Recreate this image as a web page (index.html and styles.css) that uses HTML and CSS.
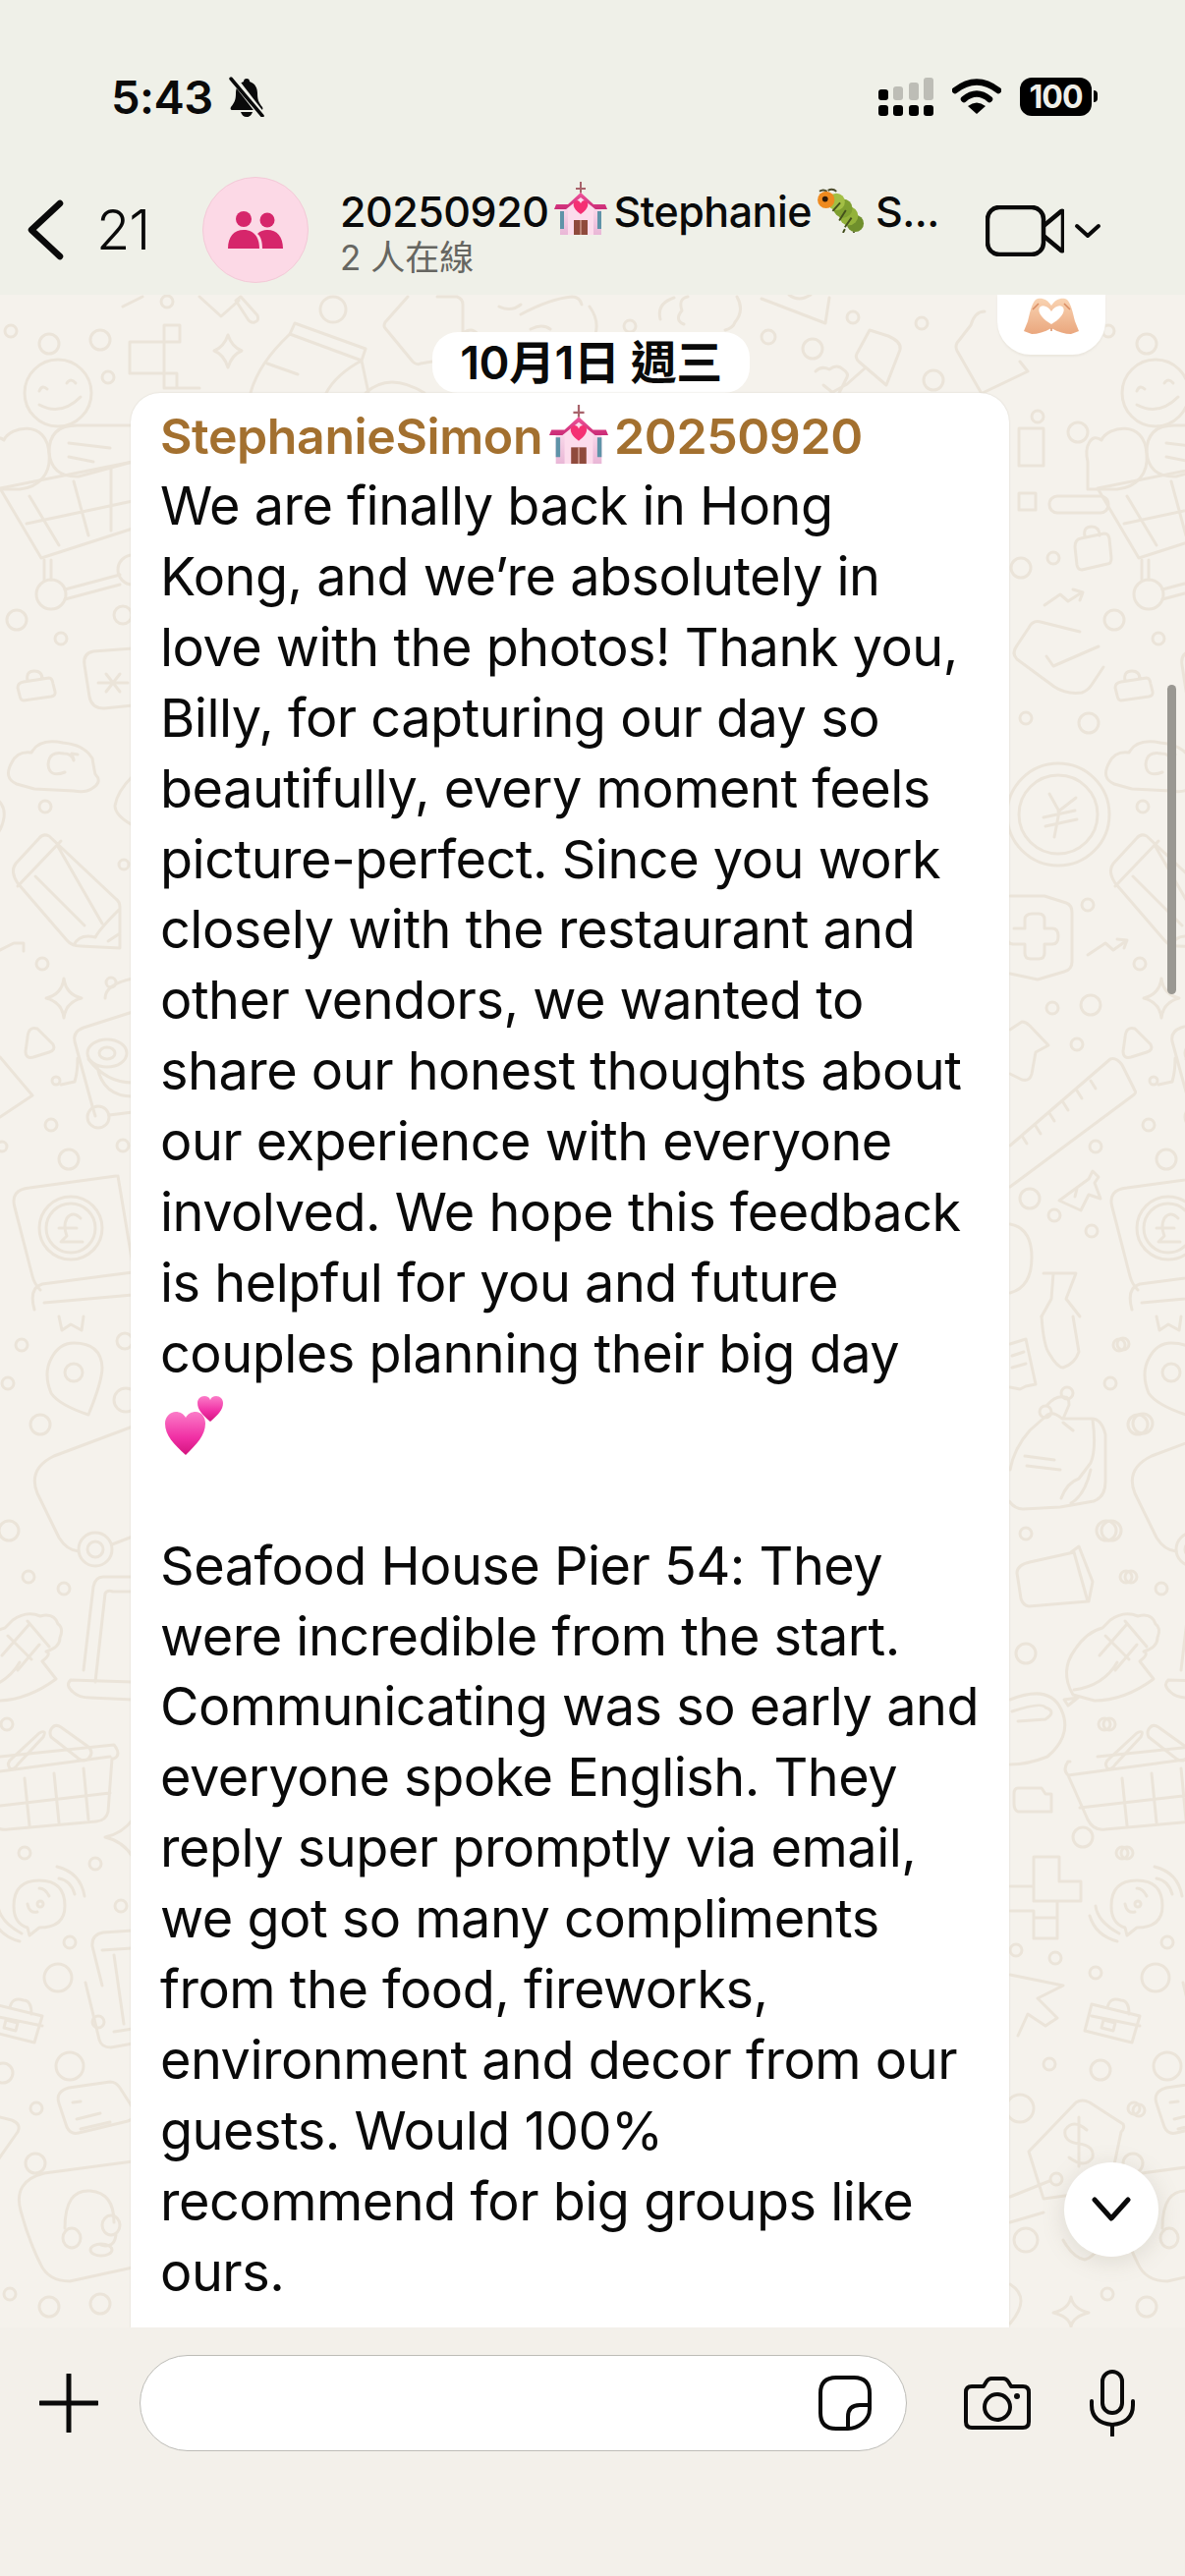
FILE: index.html
```html
<!DOCTYPE html>
<html lang="zh-Hant">

<head>
    <meta charset="UTF-8">
    <title>20250920 Stephanie</title>
    <link rel="stylesheet" href="styles.css">
</head>

<body>
    <!-- emoji used more than once -->
    <svg class="defs" width="0" height="0">
        <defs>
            <linearGradient id="roofPink" x1="0" y1="0" x2="0" y2="1">
                <stop offset="0" stop-color="#f0559b" />
                <stop offset="1" stop-color="#c92a75" />
            </linearGradient>
            <linearGradient id="wallPink" x1="0" y1="0" x2="0" y2="1">
                <stop offset="0" stop-color="#fbdcec" />
                <stop offset="1" stop-color="#e9b6d6" />
            </linearGradient>
            <linearGradient id="heartPink" x1="0" y1="0" x2="0" y2="1">
                <stop offset="0" stop-color="#fb7cc8" />
                <stop offset="0.6" stop-color="#f02fa4" />
                <stop offset="1" stop-color="#d4147f" />
            </linearGradient>
            <linearGradient id="handPeach" x1="0" y1="0" x2="0" y2="1">
                <stop offset="0" stop-color="#f9d3b2" />
                <stop offset="1" stop-color="#eaa77e" />
            </linearGradient>
            <symbol id="church" viewBox="0 0 54 54">
                <path d="M26 0h2v6h4v2h-4v7h-2V8h-4V6h4z" fill="#a8636b" />
                <path d="M6 24h42v30H6z" fill="url(#wallPink)" />
                <path d="M14 23 27 11 40 23v31H14z" fill="#fcdcec" />
                <path d="M27 11 14 23H2l-2 5h12l15-12 15 12h12l-2-5H40z" fill="url(#roofPink)" />
                <path d="M27 33c-9-6-9-13-4-14 2 0 3 1 4 3 1-2 2-3 4-3 5 1 5 8-4 14z" fill="#f52f73" />
                <path d="M20 39h14v15H20z" fill="#8f4a3c" />
                <path d="M26.500 39h1v15h-1z" fill="#e8b9b0" />
                <path d="M6 30h4v18H6zM44 30h4v18h-4z" fill="#5f93a8" />
            </symbol>
            <symbol id="caterpillar" viewBox="0 0 54 48">
                <path d="M3 4q4-3 8 0M12 3q5-3 9 1" fill="none" stroke="#4b4a2a" stroke-width="2" />
                <ellipse cx="41" cy="38" rx="9" ry="9" fill="#6f8f2c" />
                <ellipse cx="34" cy="30" rx="10" ry="10" fill="#93b23a" />
                <ellipse cx="28" cy="22" rx="10" ry="10" fill="#7f9f30" />
                <ellipse cx="21" cy="15" rx="9" ry="9" fill="#a3bf45" />
                <path d="M31 24 24 35M37 32l-7 10M25 16l-8 9" stroke="#44501c" stroke-width="2" />
                <circle cx="10" cy="13" r="9" fill="#ee8a1f" />
                <circle cx="9" cy="12" r="3" fill="#2d1a0a" />
                <path d="M30 44l-2 4M40 47l-1 1" stroke="#3f4a19" stroke-width="2" />
            </symbol>
            <symbol id="hearts" viewBox="0 0 62 62">
                <path d="M22 61C10 50 1 41 1 29 1 22 6 17 12 17c4 0 8 2 10 6 2-4 6-6 10-6 6 0 10 5 10 12 0 12-9 21-20 32z" fill="url(#heartPink)" />
                <path d="M47 27C39 20 34 15 34 8c0-4 3-7 7-7 3 0 5 1 6 4 1-3 3-4 6-4 4 0 7 3 7 7 0 7-5 12-13 19z" fill="url(#heartPink)" />
            </symbol>
            <symbol id="hearthands" viewBox="0 0 56 38">
                <path d="M28 8C24 1 16-1 12 2 8 6 6 16 4 24L0 34l8 3c6 0 13-2 20-6 7 4 14 6 20 6l8-3-4-10C50 16 48 6 44 2 40-1 32 1 28 8zm0 6c3-5 8-7 11-5 4 3 1 11-11 18-12-7-15-15-11-18 3-2 8 0 11 5z" fill="url(#handPeach)" fill-rule="evenodd" />
                <path d="M9 12l6-6M47 12l-6-6M28 31v3" stroke="#d98c62" stroke-width="1.500" fill="none" />
            </symbol>
            <!-- doodles of the tile edge, appears left and again right -->
            <g id="edgeDoodles">
                <circle cx="11" cy="337" r="6" />
                <circle cx="50" cy="350" r="10" />
                <circle cx="102" cy="346" r="10" />
                <circle cx="110" cy="384" r="6" />
                <circle cx="59" cy="400" r="34" />
                <path d="M40 398q3-7 8-2M68 390q4-6 9 0M40 412q22 12 42-8" />
                <path d="M-10 470c-4-16 4-30 14-22 6-14 44-22 46 14 2 20-10 34-30 36H-10z" />
                <path d="M70 433h65M50 460q0-27 28-27M50 460q2 26 30 25l55-15M70 451l42 5M70 465l25 5" />
                <path d="M0 497 42 568 135 538M0 497 135 470M30 505l30 50M75 490l15 55M27 533l108-23M113 475v65" />
                <path d="M45 570v20M52 570v20" />
                <circle cx="52" cy="605" r="15" />
                <path d="M66 600l56-15M66 610l56-15" />
                <circle cx="135" cy="580" r="15" />
                <circle cx="17" cy="631" r="10" />
                <circle cx="62" cy="650" r="6" />
                <circle cx="125" cy="626" r="9" />
                <path d="M24 694l26-4q3 0 4 6l2 8q1 4-4 5l-28 4q-3 0-4-5l-2-8q0-5 6-6zM28 693q-2-10 7-10 8 0 8 8" />
                <path d="M135 660l-40 3q-11 2-9 14l5 32q2 12 15 12l29-3M100 695h30M108 686l14 18M122 686l-14 18" />
                <path d="M35 803l-18-5q-14-6-5-22 6-12 20-10 8-15 32-10 22 2 30 16 2 12 3 16 8 8-4 15-6 4-18 2zM66 786q-16 6-17-8 1-14 16-11 8 0 10 7M75 773l-2-6 6 1" />
                <circle cx="46" cy="821" r="6" />
                <path d="M135 790q-16 16-18 30 0 10 18 20" />
                <path d="M50 851q-6-3-10 2l-24 26q-6 8 2 20l50 58q5 6 14 6l40 2v-42q0-5-4-8zM18 902l44-46M36 892l50 50M58 860l46 80M75 962q6-12 22-8 4-8 24-28M110 958l12-8" />
                <circle cx="126" cy="880" r="5" />
                <circle cx="43" cy="981" r="6" />
                <path d="M65 996q2 16 18 20-16 4-18 20-2-16-18-20 16-4 18-20z" />
                <path d="M28 1056q1-12 10-9l16 16q3 6-4 8l-16 5q-8 2-8-6z" />
                <circle cx="113" cy="1000" r="5" />
                <path d="M107 1016q0-14 28-20" />
                <path d="M135 1030l-50 16q-11 4-9 14l18 66 3 10M62 1104l14-3q3-10 3-24" />
                <ellipse cx="109" cy="1072" rx="20" ry="14" />
                <ellipse cx="109" cy="1072" rx="8" ry="6" />
                <path d="M90 1078q18 24 45 24M135 1116q-30 0-36-30" />
                <circle cx="57" cy="1100" r="4" />
                <circle cx="100" cy="1137" r="11" />
                <path d="M111 1135l24-3" />
                <circle cx="52" cy="1145" r="6" />
                <circle cx="125" cy="1166" r="6" />
                <circle cx="70" cy="1180" r="10" />
                <path d="M118 1197l-88 12q-20 2-15 20l18 70q2 8 8 14M135 1295l-92 12q-14 4-8 26M45 1326l90-8M120 1197l15 90" />
                <circle cx="72" cy="1250" r="32" />
                <circle cx="72" cy="1250" r="25" />
                <path d="M82 1240q-8-8-14 0-4 8 0 18l-6 6h22M60 1250h18" />
                <path d="M60 1340l3 14 9-6 11 6 2-14" />
                <path d="M75 1367q28 0 29 25 0 14-14 48-30-10-38-22-8-20 0-35 8-16 23-16z" />
                <circle cx="75" cy="1397" r="9" />
                <circle cx="22" cy="1369" r="6" />
                <circle cx="41" cy="1450" r="10" />
                <circle cx="127" cy="1365" r="8" />
                <circle cx="128" cy="1425" r="12" />
                <path d="M135 1452 55 1482q-27 13-17 38l22 45q8 13 20 14" />
                <circle cx="97" cy="1577" r="17" />
                <circle cx="97" cy="1577" r="8" />
                <path d="M114 1572l21-8" />
                <circle cx="9" cy="1558" r="10" />
                <circle cx="29" cy="1605" r="6" />
                <circle cx="65" cy="1617" r="6" />
                <path d="M-25 1725q-14-24 2-46 12-18 28-22l8-8q14-10 28-4 14-4 18 8 6 4 2 14 0 10-14 14 6 2-4 10l14 18q-30 22-60 22zM8 1665l24 24M28 1650l22 26M2 1685l28-32M18 1700l22-26M-24 1720q30-4 44-28M-20 1728l-10 8-4-6z" />
                <path d="M85 1700l10-85q2-10 10-10h30M97 1712l10-90q2-4 8-2h20M72 1710q-6 5 2 12 6 6 18 6l43 2M72 1710l63 2" />
                <circle cx="7" cy="1755" r="6" />
                <path d="M-28 1793h-2q-6 8 0 14l20 45q6 12 18 10l90-8q10-1 12-10l4-54h2q8-4 0-14l-116 12M-30 1807l142-19M25 1810l5 48M55 1805l5 50M85 1800l5 52M-18 1840l130-15" />
                <path d="M10 1800q-4-6 2-10l28-26q8-4 4 4l-26 28q-4 6-8 4zM52 1760q4-6 10-2l28 20q6 6 0 12-4 4-10 0l-28-22q-2-4 0-8z" />
                <circle cx="25" cy="1886" r="6" />
                <circle cx="97" cy="1897" r="6" />
                <circle cx="123" cy="1940" r="6" />
                <path d="M107 1870q18-4 28-18M135 1890q-10-16-28-20" />
                <path d="M40 1914q26 0 26 26 0 22-26 22l-10 8-2-8q-14-4-14-22 0-26 26-26zM28 1938q2 10 10 8M50 1930q-4-8-10-8" />
                <circle cx="41" cy="1938" r="3" />
                <path d="M58 1900q24 6 28 30M60 1912q12 2 16 16M-2 1940q2 16 24 28M-8 1950q6 20 28 26" />
                <circle cx="71" cy="1977" r="6" />
                <circle cx="59" cy="2013" r="14" />
                <path d="M135 1965l-30 2q-12 2-11 14l10 40M104 1985l30-2M135 2080l-22 4q-10 0-12-8l-14-58M116 1990l10 70M116 2068l19-3" />
                <circle cx="100" cy="2058" r="6" />
                <path d="M-6 2040l49 12-8 27-48-12zM10 2044q2-12 14-8 8 0 8 14M-6 2052l49 10M6 2056l12 3-2 8-12-3z" />
                <circle cx="71" cy="2103" r="14" />
                <circle cx="37" cy="2146" r="6" />
                <path d="M70 2125l42-6q6 0 10 6l14 22q4 8-6 12l-50 12q-8 2-12-6l-8-24q-4-12 10-16zM74 2140l8-1M78 2157l24-6M82 2167l30-7" />
                <circle cx="36" cy="2202" r="10" />
                <path d="M135 2200l-90 12q-32 8-24 38 8 30 20 54 8 18 30 18l64-14" />
                <path d="M66 2268q0-40 26-38 24 2 24 32" />
                <ellipse cx="73" cy="2278" rx="9" ry="10" />
                <ellipse cx="113" cy="2265" rx="9" ry="10" />
                <ellipse cx="103" cy="2290" rx="11" ry="6" />
                <path d="M118 2275q-2 14-15 10" />
                <circle cx="10" cy="2335" r="6" />
                <circle cx="50" cy="2348" r="10" />
                <circle cx="102" cy="2345" r="10" />
            </g>
        </defs>
    </svg>

    <header class="topbar">
        <div class="status_row">
            <div class="status_time">
                <span>5:43</span>
                <svg class="bell_icon" viewBox="0 0 40 42">
                    <path d="M20 3c-2 0-3 1-3 3-6 2-8 7-8 12 0 6-1 9-5 14-1 2 0 3 2 3h28c2 0 3-1 2-3-4-5-5-8-5-14 0-5-2-10-8-12 0-2-1-3-3-3zM14 37c1 3 3 5 6 5s5-2 6-5z" fill="#0a0a0a" />
                    <path d="M5 1l31 40" stroke="#eff0e8" stroke-width="7" />
                    <path d="M4 3l32 38" stroke="#0a0a0a" stroke-width="3.500" stroke-linecap="round" />
                </svg>
            </div>
            <div class="status_icons">
                <svg class="signal_icon" viewBox="0 0 56 39">
                    <rect x="0" y="28" width="10" height="11" rx="3" fill="#000" />
                    <rect x="15" y="28" width="10" height="11" rx="3" fill="#000" />
                    <rect x="31" y="28" width="10" height="11" rx="3" fill="#000" />
                    <rect x="46" y="28" width="10" height="11" rx="3" fill="#000" />
                    <rect x="0" y="12" width="10" height="11" rx="3" fill="#000" />
                    <rect x="15" y="9" width="10" height="14" rx="3" fill="#bdbdb6" />
                    <rect x="31" y="5" width="10" height="18" rx="3" fill="#bdbdb6" />
                    <rect x="46" y="0" width="10" height="23" rx="3" fill="#bdbdb6" />
                </svg>
                <svg class="wifi_icon" viewBox="0 0 50 36">
                    <path d="M3 12Q25-5 47 12" fill="none" stroke="#000" stroke-width="6.500" stroke-linecap="round" />
                    <path d="M12 21Q25 10 38 21" fill="none" stroke="#000" stroke-width="6.500" stroke-linecap="round" />
                    <path d="M25 36 16 28Q25 21 34 28Z" fill="#000" />
                </svg>
                <div class="battery">
                    <span class="battery_body">100</span>
                    <span class="battery_nub"></span>
                </div>
            </div>
        </div>

        <div class="nav_row">
            <svg class="back_icon" viewBox="0 0 38 62">
                <path d="M34 4 5 31l29 27" fill="none" stroke="#0a0a0a" stroke-width="6.500" stroke-linecap="round" stroke-linejoin="round" />
            </svg>
            <span class="back_count">21</span>
            <div class="avatar">
                <svg class="people_icon" viewBox="0 0 56 38">
                    <ellipse cx="16" cy="8" rx="8" ry="8" fill="#d6266b" />
                    <ellipse cx="40" cy="9" rx="7.500" ry="7.500" fill="#d6266b" />
                    <path d="M0 38c0-12 6-19 16-19s16 7 16 19z" fill="#d6266b" />
                    <path d="M35 38c0-6-1-12-5-15 3-3 6-4 10-4 10 0 16 7 16 19z" fill="#d6266b" />
                </svg>
            </div>
            <div class="chat_title">
                <div class="chat_name">20250920<svg class="emoji_church"><use href="#church" /></svg>Stephanie<svg class="emoji_bug"><use href="#caterpillar" /></svg>S...</div>
                <div class="chat_online">2 人在線</div>
            </div>
            <div class="video_btn">
                <svg class="video_icon" viewBox="0 0 80 52">
                    <rect x="2" y="2" width="57" height="48" rx="12" fill="none" stroke="#0a0a0a" stroke-width="4.500" />
                    <path d="M59 21 77 6q2-1 2 2v36q0 3-2 2L59 31" fill="none" stroke="#0a0a0a" stroke-width="4.500" stroke-linejoin="round" />
                </svg>
                <svg class="video_chevron" viewBox="0 0 28 16">
                    <path d="M3 3l11 10L25 3" fill="none" stroke="#0a0a0a" stroke-width="4" stroke-linecap="round" stroke-linejoin="round" />
                </svg>
            </div>
        </div>
    </header>

    <main class="chat">
        <!-- wallpaper -->
        <svg class="wallpaper" viewBox="0 300 1206 2069">
            <use href="#edgeDoodles" />
            <use href="#edgeDoodles" x="1117" />
            <!-- ends of doodles that run off the left edge -->
            <path d="M-8 810q14 8 12 22-2 14-12 22M-10 972l24-12M14 960l10 0 0 8M-10 1070l10 6 33 39-33 22M-12 2152l24 6q10 4 6 12l-28 40" />
            <circle cx="8" cy="1408" r="6" />
            <circle cx="2" cy="1167" r="5" />
            <circle cx="3" cy="2110" r="10" />
            <circle cx="170" cy="307" r="6" />
            <path d="M125 312l20-10M203 302l22 20 18-16" />
            <path d="M240 306l5-4 17 19q2 6-3 7-3 1-6-2z" />
            <circle cx="339" cy="315" r="13" />
            <path d="M167 331h16v17h-16zM132 348h35v32h-35zM167 380h13v15h-13zM180 395h23" />
            <path d="M232 341q4 12 14 16-10 4-14 17-4-13-14-17 10-4 14-16z" />
            <path d="M300 329l72 26-4 12-73-27zM295 340q-32 30-40 60M368 367q-26 14-36 33M368 367l7 33M272 370l31 11" />
            <path d="M372 400q24-22 60 0" />
            <path d="M415 302l-23 26q-2 4 0 6l28 34q4 4 8 2l12-2M445 302h20q6 2 6 8v28M470 340q10-8 16 0" />
            <path d="M508 312q12 6 22-2M530 320q30-16 52-18 8 0 10 8M540 335q12-6 20 0" />
            <path d="M600 312q10 14 6 28M672 325q-4-16 14-22M700 302q-10 2-6 14-8 10 2 14M750 302q8 14-2 26-2 6-10 8" />
            <circle cx="641" cy="332" r="6" />
            <path d="M775 304l65 25 4-26M803 300q10 8 22 0" />
            <circle cx="868" cy="323" r="6" />
            <circle cx="938" cy="329" r="6" />
            <circle cx="782" cy="343" r="7" />
            <circle cx="827" cy="355" r="10" />
            <path d="M885 336l19 6q14 6 12 14l-14 36-28-24q-4-4-2-8z" />
            <path d="M830 378q6-6 14-2 8-6 14 0 6 4 4 8l-8 16M880 375l-18 16-16 9M838 392l10 8" />
            <circle cx="950" cy="387" r="10" />
            <path d="M1002 317q-10 0-14 14l-14 18q-2 4 0 8l24 42M1000 400l46-22-8-10" />
            <!-- doodles between the bubble and the tile edge -->
            <path d="M1028 340q12 6 26-4" />
            <circle cx="1056" cy="424" r="6" />
            <circle cx="1097" cy="440" r="10" />
            <path d="M1037 436h25v38h-25zM1037 502h17v17h-17z" />
            <rect x="1068" y="505" width="60" height="17" rx="8" />
            <path d="M1100 548l24-5q4 0 5 5l2 20q0 6-4 6l-26 6q-4 0-5-5l-2-18q0-8 6-9zM1104 546q-2-10 7-10 8 0 8 9" />
            <circle cx="1072" cy="568" r="6" />
            <circle cx="1039" cy="578" r="10" />
            <path d="M1063 616l16-11 8 7 14-9M1092 600l10 3-3 8" />
            <path d="M1099 643l-40-10q-8-2-12 6l-12 18q-6 8 0 14l38 28q12 8 28 6 6-2 10-8l12-18M1065 668l7 10 46-20" />
            <circle cx="1044" cy="731" r="6" />
            <circle cx="1108" cy="736" r="10" />
            <circle cx="1077" cy="829" r="52" />
            <circle cx="1077" cy="829" r="40" />
            <path d="M1068 808l10 18-5 26M1095 812l-18 14M1062 832l32-7M1064 841l32-7" />
            <path d="M1028 912l35 0 22 7q6 2 6 10v50q0 8-8 10l-27 8-28-6" />
            <path d="M1032 945h11v-9q0-6 8-6h6q6 0 6 6v9h8q6 0 6 8 0 8-6 8h-8v9q0 6-6 6h-8q-6 0-6-6v-9h-12q-6 0-6-8" />
            <circle cx="1107" cy="921" r="6" />
            <circle cx="1110" cy="1023" r="10" />
            <circle cx="1071" cy="1026" r="6" />
            <circle cx="1096" cy="1063" r="6" />
            <path d="M1107 972l18-12 8 7 14-10M1137 956l10 1-3 8" />
            <path d="M1028 1048l12-8q4 0 8 4l19 20-13 7-4 22q-2 8-10 6l-12-6" />
            <path d="M1028 1166l102-88q6-2 12 6l13 26q2 2-2 5l-125 93M1040 1156l5 8M1054 1146l5 8M1068 1133l5 8M1082 1122l5 8M1096 1110l5 8M1110 1100l5 8" />
            <circle cx="1115" cy="1167" r="6" />
            <circle cx="1048" cy="1220" r="10" />
            <circle cx="1111" cy="1253" r="6" />
            <circle cx="1073" cy="1237" r="6" />
            <path d="M1078 1222l30-22 4-8 6 6-4 6 6 16-12-4-8 16zM1096 1210l-2 8" />
            <path d="M1028 1246q22 4 22 34 0 30-22 36" />
            <path d="M1062 1296h33l-10 26 14 18M1072 1296l-2 26-10 18" />
            <path d="M1060 1340q2 30 8 38 8 14 14 14 12-4 16-16l-6-36" />
            <path d="M1028 1368l16-5 10 46-10 2-6 3-10-2M1030 1380l12-4M1030 1392l14-4" />
            <circle cx="1086" cy="1418" r="6" />
            <circle cx="1130" cy="1408" r="6" />
            <circle cx="1143" cy="1368" r="6" />
            <circle cx="1163" cy="1449" r="10" />
            <path d="M1028 1496q4-22 20-40l18-16q6-4 15 4h30q10 0 14 16v48q0 16-12 20l-34 6-38 2q-8 0-14-8M1045 1492l34 4M1043 1482l30 4M1080 1525q6-16 18-20l12-16q6-14 2-44M1090 1530q14-8 20-34M1066 1430q8-10 18-8 4 0 4 8l-6 14M1082 1448l10 8" />
            <circle cx="1064" cy="1437" r="6" />
            <circle cx="1044" cy="1561" r="6" />
            <circle cx="1131" cy="1558" r="10" />
            <circle cx="1151" cy="1605" r="6" />
            <path d="M1048 1590l45-10 14 50-60 5q-6-1-8-8l-4-26q0-8 13-11zM1090 1580l8-6 14 36-4 20" />
            <circle cx="1044" cy="1683" r="10" />
            <path d="M1028 1730q40-16 52 10 12 26-14 48-20 8-38 8M1030 1742q30-10 34-4 12 4 0 12l-28 2" />
            <circle cx="1129" cy="1755" r="6" />
            <path d="M1036 1820h24l4 6h6v18h-34q-4-2-4-8v-10q0-6 4-6z" />
            <circle cx="1102" cy="1870" r="10" />
            <circle cx="1147" cy="1886" r="6" />
            <path d="M1028 1920h24v-30h26v25h22v20h-24v38h-24v-28h-24M1052 1920v15h24M1052 1952h24" />
            <circle cx="1034" cy="1985" r="6" />
            <circle cx="1074" cy="1993" r="6" />
            <circle cx="1115" cy="2008" r="6" />
            <path d="M1028 2010l54 11-26 13 20 20-12 8-18-12-10 22" />
            <circle cx="1068" cy="2101" r="6" />
            <circle cx="1120" cy="2107" r="10" />
            <circle cx="1159" cy="2148" r="6" />
            <circle cx="1038" cy="2146" r="14" />
            <path d="M1047 2190l48-50q6-4 14 0l34 22q2 4-2 8l-8 38M1047 2190l15 48 58-8" />
            <path d="M1106 2168q-14-12-22 0-2 12 14 14 16 2 14 14-8 12-24 0M1098 2155v50" />
            <circle cx="1075" cy="2218" r="6" />
            <path d="M1028 2236l40-16M1028 2262l34-10" />
            <circle cx="1044" cy="2280" r="12" />
            <path d="M1082 2280q10 18 22 20 14-4 16-24" />
            <path d="M1090 2338q2 12 18 16-16 4-18 14-2-10-18-14 16-4 18-16z" />
            <path d="M1028 2325q22 14 0 40" />
        </svg>

        <div class="prev_bubble">
            <svg class="emoji_hands"><use href="#hearthands" /></svg>
        </div>
        <div class="date_pill">10月1日 週三</div>

        <article class="bubble">
            <div class="sender">StephanieSimon<svg class="emoji_church_lg"><use href="#church" /></svg>20250920</div>
            <p class="msg_text">We are finally back in Hong<br>
                Kong, and we’re absolutely in<br>
                love with the photos! Thank you,<br>
                Billy, for capturing our day so<br>
                beautifully, every moment feels<br>
                picture-perfect. Since you work<br>
                closely with the restaurant and<br>
                other vendors, we wanted to<br>
                share our honest thoughts about<br>
                our experience with everyone<br>
                involved. We hope this feedback<br>
                is helpful for you and future<br>
                couples planning their big day<br>
                <svg class="emoji_hearts"><use href="#hearts" /></svg><br>
                <br>
                Seafood House Pier 54: They<br>
                were incredible from the start.<br>
                Communicating was so early and<br>
                everyone spoke English. They<br>
                reply super promptly via email,<br>
                we got so many compliments<br>
                from the food, fireworks,<br>
                environment and decor from our<br>
                guests. Would 100%<br>
                recommend for big groups like<br>
                ours.</p>
        </article>

        <div class="scroll_thumb"></div>
        <button class="down_btn">
            <svg viewBox="0 0 40 26">
                <path d="M3 3l17 19L37 3" fill="none" stroke="#0a0a0a" stroke-width="5" stroke-linecap="round" stroke-linejoin="round" />
            </svg>
        </button>
    </main>

    <footer class="inputbar">
        <svg class="plus_icon" viewBox="0 0 60 60">
            <path d="M30 1v58M1 30h58" fill="none" stroke="#0a0a0a" stroke-width="5" stroke-linecap="round" />
        </svg>
        <div class="input_box">
            <svg class="sticker_icon" viewBox="0 0 54 56">
                <path d="M18 2h18q16 0 16 16v16C52 46 40 54 30 54H18Q2 54 2 38V18Q2 2 18 2z" fill="none" stroke="#0a0a0a" stroke-width="4" />
                <path d="M52 30H42Q30 30 30 42v12" fill="none" stroke="#0a0a0a" stroke-width="4" />
            </svg>
        </div>
        <svg class="camera_icon" viewBox="0 0 68 54">
            <path d="M8 10h12l3-5q2-3 5-3h12q3 0 5 3l3 5h12q6 0 6 6v30q0 6-6 6H8q-6 0-6-6V16q0-6 6-6z" fill="none" stroke="#0a0a0a" stroke-width="4" stroke-linejoin="round" />
            <circle cx="34" cy="31" r="13" fill="none" stroke="#0a0a0a" stroke-width="4" />
            <circle cx="54" cy="20" r="3" fill="#0a0a0a" />
        </svg>
        <svg class="mic_icon" viewBox="0 0 48 68">
            <rect x="14" y="2" width="20" height="42" rx="10" fill="none" stroke="#0a0a0a" stroke-width="4" />
            <path d="M3 32v4q0 18 21 20 21-2 21-20v-4M24 56v11" fill="none" stroke="#0a0a0a" stroke-width="4" stroke-linecap="round" />
        </svg>
    </footer>
</body>

</html>
```

FILE: styles.css
```css
* {
    margin: 0;
    padding: 0;
    box-sizing: border-box;
}

body {
    width: 1206px;
    height: 2622px;
    overflow: hidden;
    display: flex;
    flex-direction: column;
    font-family: Inter, "Noto Sans CJK TC", sans-serif;
    color: #0a0a0a;
    background: #f5f2ec;
}

.defs {
    position: absolute;
}

/* top bar */
.topbar {
    height: 300px;
    flex: none;
    background: #eff0e8;
    padding-top: 78px;
}

.status_row {
    display: flex;
    justify-content: space-between;
    align-items: center;
    height: 40px;
    padding: 0 89px 0 113px;
}

.status_time {
    display: flex;
    align-items: center;
    gap: 14px;
    font-size: 47px;
    font-weight: 600;
    letter-spacing: -0.5px;
}

.bell_icon {
    width: 40px;
    height: 42px;
}

.status_icons {
    display: flex;
    align-items: center;
}

.signal_icon {
    width: 56px;
    height: 39px;
    margin-right: 19px;
}

.wifi_icon {
    width: 50px;
    height: 36px;
    margin-right: 19px;
}

.battery {
    display: flex;
    align-items: center;
    gap: 2px;
}

.battery_body {
    width: 73px;
    height: 39px;
    border-radius: 12px;
    background: #000;
    color: #efefe8;
    font-size: 32px;
    font-weight: 700;
    line-height: 39px;
    text-align: center;
    letter-spacing: -1px;
}

.battery_nub {
    width: 4px;
    height: 12px;
    background: #000;
    border-radius: 0 4px 4px 0;
}

.nav_row {
    display: flex;
    align-items: center;
    height: 108px;
    margin-top: 62px;
    padding-left: 27px;
}

.back_icon {
    width: 38px;
    height: 62px;
}

.back_count {
    width: 141px;
    padding-left: 33px;
    font-size: 56px;
    font-weight: 300;
    letter-spacing: -1px;
}

.avatar {
    width: 108px;
    height: 108px;
    flex: none;
    display: flex;
    align-items: center;
    justify-content: center;
    border-radius: 50%;
    background: #fcd9e6;
    border: 1px solid #f3c9d7;
}

.people_icon {
    width: 56px;
    height: 38px;
}

.chat_title {
    width: 689px;
    padding-left: 32px;
    flex: none;
}

.chat_name {
    display: flex;
    align-items: center;
    height: 56px;
    font-size: 43px;
    font-weight: 500;
    letter-spacing: -0.5px;
    white-space: nowrap;
}

.emoji_church {
    width: 54px;
    height: 54px;
    margin: -6px 6px 0 6px;
}

.emoji_bug {
    width: 54px;
    height: 46px;
    margin: -2px 7px 0 4px;
}

.chat_online {
    font-size: 35px;
    line-height: 38px;
    color: #666661;
}

.video_btn {
    display: flex;
    align-items: center;
    gap: 10px;
    margin-top: 2px;
}

.video_icon {
    width: 80px;
    height: 52px;
}

.video_chevron {
    width: 28px;
    height: 16px;
}

/* chat area */
.chat {
    flex: 1;
    position: relative;
    overflow: hidden;
    display: flex;
    flex-direction: column;
}

.wallpaper {
    position: absolute;
    inset: 0;
    width: 100%;
    height: 100%;
    fill: none;
    stroke: #ebe4d9;
    stroke-width: 3;
    stroke-linecap: round;
    stroke-linejoin: round;
}

.prev_bubble {
    position: relative;
    align-self: flex-end;
    width: 110px;
    height: 61px;
    margin-right: 81px;
    display: flex;
    justify-content: center;
    padding-top: 3px;
    background: #fff;
    border-radius: 0 0 34px 34px;
    box-shadow: 0 2px 2px #ebe7df;
}

.emoji_hands {
    width: 56px;
    height: 38px;
}

.date_pill {
    position: relative;
    align-self: flex-start;
    width: 323px;
    height: 62px;
    margin: -23px 0 0 440px;
    border-radius: 26px;
    background: #fff;
    font-size: 47px;
    font-weight: 600;
    line-height: 62px;
    text-align: center;
    letter-spacing: -0.5px;
}

.bubble {
    position: relative;
    width: 894px;
    flex: 1;
    margin-left: 133px;
    padding: 14px 0 0 30px;
    background: #fff;
    border-radius: 30px 30px 0 0;
    box-shadow: 0 0 2px #d8d4cb;
}

.sender {
    display: flex;
    align-items: center;
    height: 60px;
    font-size: 50px;
    font-weight: 600;
    letter-spacing: -0.4px;
    color: #a3702f;
    white-space: nowrap;
}

.emoji_church_lg {
    width: 60px;
    height: 60px;
    margin: -4px 6px 0 7px;
}

.msg_text {
    margin-top: 5px;
    font-size: 54px;
    line-height: 71.900px;
    letter-spacing: -0.5px;
    white-space: nowrap;
}

.emoji_hearts {
    width: 62px;
    height: 62px;
    vertical-align: -13px;
    margin-left: 4px;
}

.scroll_thumb {
    position: absolute;
    left: 1188px;
    top: 397px;
    width: 9px;
    height: 315px;
    border-radius: 5px;
    background: #9a9892;
}

.down_btn {
    position: absolute;
    left: 1083px;
    top: 1901px;
    width: 96px;
    height: 96px;
    display: flex;
    align-items: center;
    justify-content: center;
    border: 0;
    border-radius: 50%;
    background: #fff;
    box-shadow: 0 4px 24px rgba(120, 110, 90, 0.18);
}

.down_btn svg {
    width: 40px;
    height: 26px;
}

/* bottom bar */
.inputbar {
    height: 253px;
    flex: none;
    display: flex;
    align-items: center;
    align-self: stretch;
    padding: 0 0 99px 40px;
    background: #f3f0ea;
}

.plus_icon {
    width: 60px;
    height: 60px;
    margin-right: 42px;
}

.input_box {
    width: 781px;
    height: 98px;
    display: flex;
    align-items: center;
    justify-content: flex-end;
    padding-right: 35px;
    background: #fff;
    border: 1.500px solid #bdbcb7;
    border-radius: 49px;
    margin-right: 58px;
}

.sticker_icon {
    width: 54px;
    height: 56px;
}

.camera_icon {
    width: 68px;
    height: 54px;
    margin-right: 59px;
}

.mic_icon {
    width: 48px;
    height: 68px;
}
```
